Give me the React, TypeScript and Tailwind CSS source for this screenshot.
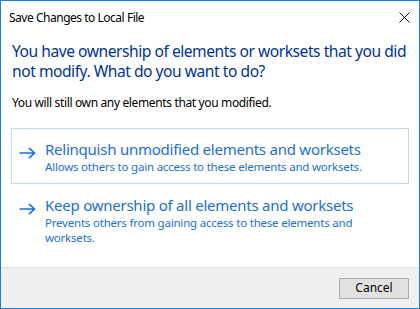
import type { ReactNode } from 'react'

const font = { fontFamily: '"Noto Sans", "Segoe UI", sans-serif' }

function Arrow() {
  return (
    <svg width="17" height="12" viewBox="0 0 17 12" className="shrink-0">
      <path d="M0.5 6 H15.5 M10 0.8 L15.5 6 L10 11.2" fill="none" stroke="#1c6fd6" strokeWidth="1.6" />
    </svg>
  )
}

interface OptionProps {
  title: string
  children: ReactNode
  selected?: boolean
}

function CommandLink({ title, children, selected }: OptionProps) {
  return (
    <div
      className={
        'flex gap-[9px] pl-[7px] pr-3 pt-[10px] pb-[9px] border ' +
        (selected ? 'border-[#bcdcf4]' : 'border-transparent')
      }
    >
      <div className="pt-[8px]">
        <Arrow />
      </div>
      <div className="text-[#1c6fd6]">
        <div className="text-[15px] leading-[20px] tracking-[-0.016em]">{title}</div>
        <div className="text-[11.5px] leading-[15px] tracking-[-0.018em]">{children}</div>
      </div>
    </div>
  )
}

export default function App() {
  return (
    <div
      className="w-[420px] h-[309px] border border-[#1883d7] bg-white flex flex-col text-black"
      style={font}
    >
      <div className="h-[30px] flex items-center justify-between pt-[3px] pl-[8px] pr-[9px]">
        <span className="text-[12px] leading-[16px] tracking-[-0.04em]">Save Changes to Local File</span>
        <svg width="11" height="11" viewBox="0 0 11 11">
          <path d="M0.5 0.5 L10.5 10.5 M10.5 0.5 L0.5 10.5" stroke="#111" strokeWidth="1" />
        </svg>
      </div>

      <div className="px-[10px] pt-[10px]">
        <div className="pl-[1px] text-[15.6px] leading-[20px] tracking-[-0.03em] text-[#003399] whitespace-nowrap">
          <div>You have ownership of elements or worksets that you did</div>
          <div>not modify. What do you want to do?</div>
        </div>
        <div className="pl-[1px] mt-[14px] text-[12px] leading-[16px] tracking-[-0.03em]">
          You will still own any elements that you modified.
        </div>

        <div className="mt-[17px] flex flex-col">
          <CommandLink title="Relinquish unmodified elements and worksets" selected>
            Allows others to gain access to these elements and worksets.
          </CommandLink>
          <CommandLink title="Keep ownership of all elements and worksets">
            Prevents others from gaining access to these elements and
            <br />
            worksets.
          </CommandLink>
        </div>
      </div>

      <div className="mt-auto h-[41px] bg-[#f0f0f0] border-t border-[#dfdfdf] flex items-center justify-end pr-[10px]">
        <button className="w-[70px] h-[21px] bg-[#e1e1e1] border border-[#adadad] text-[12px] leading-none">
          Cancel
        </button>
      </div>
    </div>
  )
}
